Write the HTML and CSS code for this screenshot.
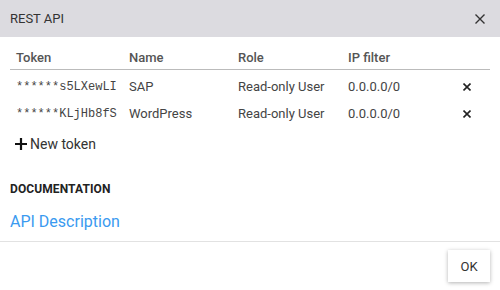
FILE: index.html
```html
<!DOCTYPE html>
<html lang="en">
<head>
    <meta charset="UTF-8">
    <meta name="viewport" content="width=device-width, initial-scale=1.0">
    <title>REST API</title>
    <link rel="stylesheet" href="styles.css">
</head>
<body>
    <div class="dialog">
        <div class="dialog-header">
            <span class="dialog-title">REST API</span>
            <button class="icon-btn close-btn" title="Close">
                <svg width="10" height="10" viewBox="0 0 10 10"><path d="M0.5 0.5L9.5 9.5M9.5 0.5L0.5 9.5" stroke="#333" stroke-width="1.4"/></svg>
            </button>
        </div>
        <div class="dialog-body">
            <table class="tokens">
                <thead>
                    <tr>
                        <th class="col-token">Token</th>
                        <th class="col-name">Name</th>
                        <th class="col-role">Role</th>
                        <th class="col-ip">IP filter</th>
                        <th class="col-action"></th>
                    </tr>
                </thead>
                <tbody>
                    <tr>
                        <td class="mono">******s5LXewLI</td>
                        <td>SAP</td>
                        <td>Read-only User</td>
                        <td>0.0.0.0/0</td>
                        <td class="action">
                            <button class="icon-btn" title="Delete">
                                <svg width="8" height="8" viewBox="0 0 8 8"><path d="M0.5 0.5L7.5 7.5M7.5 0.5L0.5 7.5" stroke="#222" stroke-width="1.6"/></svg>
                            </button>
                        </td>
                    </tr>
                    <tr>
                        <td class="mono">******KLjHb8fS</td>
                        <td>WordPress</td>
                        <td>Read-only User</td>
                        <td>0.0.0.0/0</td>
                        <td class="action">
                            <button class="icon-btn" title="Delete">
                                <svg width="8" height="8" viewBox="0 0 8 8"><path d="M0.5 0.5L7.5 7.5M7.5 0.5L0.5 7.5" stroke="#222" stroke-width="1.6"/></svg>
                            </button>
                        </td>
                    </tr>
                </tbody>
            </table>

            <button class="new-token">
                <svg width="12" height="12" viewBox="0 0 12 12"><path d="M6 0V12M0 6H12" stroke="#111" stroke-width="2.2"/></svg>
                New token
            </button>

            <h3 class="section-title">DOCUMENTATION</h3>
            <a class="doc-link" href="#">API Description</a>
        </div>
        <div class="dialog-footer">
            <button class="ok-btn">OK</button>
        </div>
    </div>
</body>
</html>
```

FILE: styles.css
```css
body {
    margin: 0;
    font-family: Roboto, "Liberation Sans", sans-serif;
    color: #333;
    background-color: #fff;
}

.dialog {
    width: 500px;
    height: 290px;
    display: flex;
    flex-direction: column;
}

.dialog-header {
    height: 37px;
    background-color: #dcdbe0;
    display: flex;
    align-items: center;
    justify-content: space-between;
    padding: 0 10px;
}

.dialog-title {
    font-size: 13px;
    color: #333;
}

.icon-btn {
    background: none;
    border: none;
    padding: 0;
    cursor: pointer;
    display: flex;
    align-items: center;
    justify-content: center;
}

.close-btn {
    width: 20px;
    height: 20px;
}

.dialog-body {
    flex: 1;
    padding: 8px 10px 0;
}

.tokens {
    width: 480px;
    border-collapse: collapse;
    table-layout: fixed;
    font-size: 13px;
}

.tokens th {
    text-align: left;
    font-weight: 500;
    color: #555;
    height: 24px;
    padding: 0 6px;
    border-bottom: 1px solid #bbb;
}

.col-token { width: 101px; }
.col-name { width: 97px; }
.col-role { width: 98px; }
.col-ip { width: 98px; }

.tokens td {
    height: 27px;
    padding: 0 6px;
    color: #444;
    white-space: nowrap;
}

.tokens tbody tr:first-child td {
    padding-top: 3px;
}

.mono {
    font-family: "Liberation Mono", monospace;
    font-size: 12px;
    color: #333;
}

.action .icon-btn {
    margin-left: 3px;
    width: 12px;
    height: 12px;
}

.new-token {
    margin-top: 6px;
    display: flex;
    align-items: center;
    gap: 3px;
    background: none;
    border: none;
    padding: 0 0 0 5px;
    font-family: inherit;
    font-size: 14px;
    color: #333;
    cursor: pointer;
    height: 22px;
}

.section-title {
    margin: 27px 0 0;
    font-size: 12px;
    font-weight: bold;
    color: #222;
    letter-spacing: 0.1px;
}

.doc-link {
    display: inline-block;
    margin-top: 16px;
    font-size: 16px;
    color: #3a9af0;
    text-decoration: none;
}

.dialog-footer {
    border-top: 1px solid #e2e2e2;
    height: 48px;
    display: flex;
    align-items: center;
    justify-content: flex-end;
    padding: 0 10px;
}

.ok-btn {
    width: 42px;
    height: 32px;
    border: none;
    background-color: #fff;
    box-shadow: 0 1px 4px rgba(0, 0, 0, 0.3);
    font-family: inherit;
    font-size: 13px;
    color: #333;
    cursor: pointer;
}
```
